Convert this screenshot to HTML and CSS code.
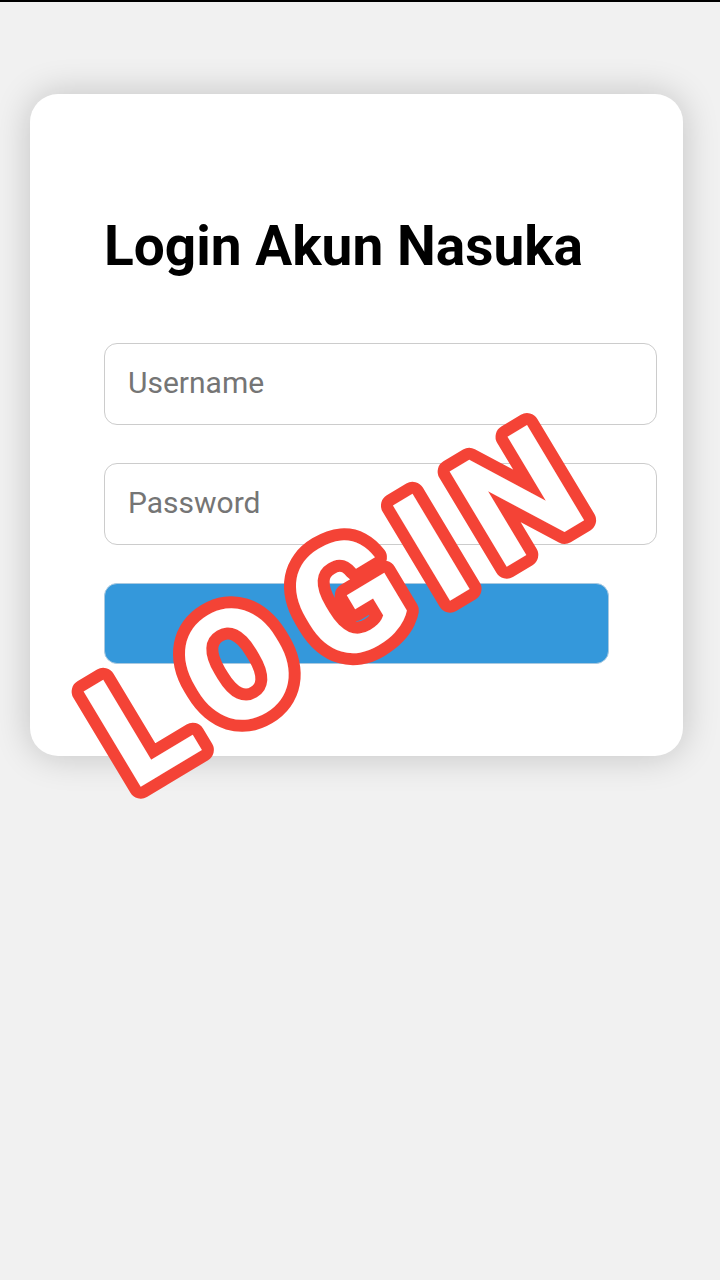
FILE: index.html
```html
<!DOCTYPE html>
<html lang="id">
<head>
<meta charset="utf-8">
<meta name="viewport" content="width=device-width, initial-scale=1">
<title>Login Akun Nasuka</title>
<link rel="stylesheet" href="styles.css">
</head>
<body>
<main class="page">
  <section class="card">
    <h1 class="title">Login Akun Nasuka</h1>
    <form class="form">
      <input class="field" type="text" name="username" placeholder="Username" aria-label="Username">
      <input class="field" type="password" name="password" placeholder="Password" aria-label="Password">
      <button class="submit" type="submit" aria-label="Login"></button>
    </form>
    <svg class="stamp" viewBox="0 0 653 662">
      <text class="stamp-text" transform="translate(110 693) rotate(-31)" x="-9" y="0">LOGIN</text>
    </svg>
  </section>
</main>
</body>
</html>
```
FILE: styles.css
```css
body {
  margin: 0;
  min-height: 100vh;
  box-sizing: border-box;
  border-top: 2px solid #000;
  background: #f1f1f1;
  font-family: Roboto, "Liberation Sans", sans-serif;
}

.page {
  padding: 92px 37px 92px 30px;
}

.card {
  position: relative;
  padding: 120px 74px 92px;
  border-radius: 28px;
  background: #fff;
  box-shadow: 0 0 36px rgba(0, 0, 0, 0.2);
}

.title {
  margin: 0 0 65px;
  font-size: 55px;
  line-height: 64px;
  font-weight: 700;
  color: #000;
  white-space: nowrap;
}

.form {
  display: flex;
  flex-direction: column;
  align-items: flex-start;
  gap: 38px;
}

/* Fields keep content-box sizing, so they run wider than the button. */
.field {
  box-sizing: content-box;
  width: 100%;
  height: 34px;
  padding: 21px 23px 25px;
  border: 1px solid #ccc;
  border-radius: 13px;
  background: #fff;
  font-family: inherit;
  font-size: 30px;
  color: #000;
}

.field::placeholder {
  color: #757575;
}

.submit {
  width: 100%;
  height: 81px;
  padding: 0;
  border: 1px solid #a9c9e0;
  border-radius: 13px;
  background: #3498db;
}

.stamp {
  position: absolute;
  top: 0;
  left: 0;
  width: 100%;
  overflow: visible;
  pointer-events: none;
}

.stamp-text {
  font-size: 156px;
  font-weight: 700;
  letter-spacing: 22px;
  fill: #fff;
  stroke: #f44336;
  stroke-width: 24px;
  stroke-linejoin: round;
  paint-order: stroke;
}
```
